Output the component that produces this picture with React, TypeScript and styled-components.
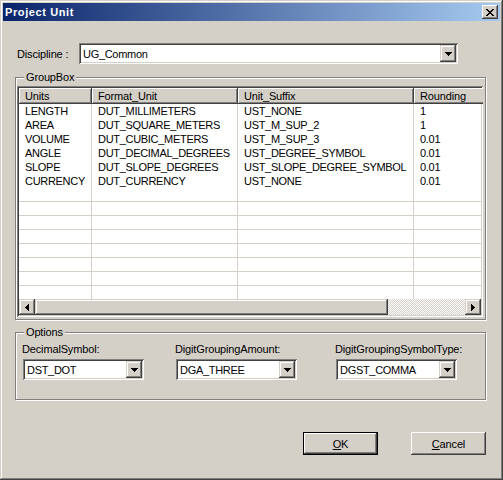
import React from "react";
import styled, { createGlobalStyle, css } from "styled-components";

const face = "#D4D0C8";
const shade = "#808080";
const dark = "#404040";

const GlobalStyle = createGlobalStyle`
  html, body {
    margin: 0;
    padding: 0;
    background: ${face};
  }
  * {
    box-sizing: border-box;
  }
`;

// raised bevel used on combo / scroll buttons and the grid header
const raised = css`
  background: ${face};
  box-shadow: inset -1px -1px ${dark}, inset 1px 1px ${face},
    inset -2px -2px ${shade}, inset 2px 2px #fff;
`;

const sunken = css`
  box-shadow: inset 1px 1px ${shade}, inset -1px -1px #fff,
    inset 2px 2px ${dark}, inset -2px -2px ${face};
`;

// upper case values are set tighter, like the old bitmap font
const caps = css`
  letter-spacing: -0.3px;
`;

const Window = styled.div`
  width: 503px;
  height: 480px;
  padding: 3px;
  display: flex;
  flex-direction: column;
  background: ${face};
  font-family: "Liberation Sans", Arial, sans-serif;
  font-size: 11px;
  letter-spacing: -0.15px;
  color: #000;
  box-shadow: inset -1px -1px ${dark}, inset 1px 1px ${face},
    inset -2px -2px ${shade}, inset 2px 2px #fff;
`;

const TitleBar = styled.div`
  height: 18px;
  flex: none;
  display: flex;
  align-items: center;
  justify-content: space-between;
  padding: 0 2px;
  background: linear-gradient(to right, #0a246a, #a6caf0);
`;

const Title = styled.span`
  color: #fff;
  font-weight: bold;
  font-size: 11px;
  letter-spacing: 0.6px;
`;

const CloseBox = styled.div`
  width: 16px;
  height: 14px;
  display: flex;
  align-items: center;
  justify-content: center;
  background: ${face};
  box-shadow: inset -1px -1px ${dark}, inset 1px 1px #fff,
    inset -2px -2px ${shade}, inset 2px 2px ${face};
`;

const Body = styled.div`
  display: flex;
  flex-direction: column;
  padding-left: 12px;
`;

const FieldRow = styled.div`
  display: flex;
  align-items: center;
  margin-top: 22px;
  padding-left: 2px;
`;

const FieldLabel = styled.span`
  width: 62px;
`;

const ComboBox = styled.div<{ $w: number }>`
  width: ${(p) => p.$w}px;
  height: 21px;
  padding: 2px;
  display: flex;
  align-items: center;
  background: #fff;
  ${sunken};
`;

const ComboText = styled.span`
  flex: 1;
  padding-left: 2px;
  white-space: nowrap;
  ${caps};
`;

const ComboButton = styled.div`
  width: 16px;
  height: 17px;
  display: flex;
  align-items: center;
  justify-content: center;
  ${raised};
`;

const Frame = styled.div<{ $gap: number }>`
  position: relative;
  width: 471px;
  margin-top: ${(p) => p.$gap}px;
  border: 1px solid ${shade};
  box-shadow: inset 1px 1px #fff, 1px 1px #fff;
`;

const Caption = styled.span`
  position: absolute;
  top: -7px;
  left: 8px;
  padding: 0 2px;
  line-height: 13px;
  background: ${face};
`;

const GridFrame = styled(Frame)`
  padding: 8px 0 2px 1px;
`;

const OptionsFrame = styled(Frame)`
  padding: 10px 0 19px 7px;
`;

const GridView = styled.div`
  width: 466px;
  height: 231px;
  padding: 2px;
  display: flex;
  flex-direction: column;
  overflow: hidden;
  background: #fff;
  ${sunken};
`;

const Row = styled.div`
  display: flex;
  flex: none;
`;

const HeadCell = styled.div<{ $w: number }>`
  flex: 0 0 ${(p) => p.$w}px;
  height: 16px;
  line-height: 16px;
  padding-left: 6px;
  white-space: nowrap;
  overflow: hidden;
  background: ${face};
  box-shadow: inset -1px -1px ${dark}, inset 1px 1px #fff,
    inset -2px -2px ${shade};
`;

const Rows = styled.div`
  height: 195px;
  overflow: hidden;
  background: #fff;
`;

const Cell = styled.div<{ $w: number; $blank?: boolean }>`
  flex: 0 0 ${(p) => p.$w}px;
  height: 14px;
  line-height: 14px;
  padding-left: 6px;
  white-space: nowrap;
  overflow: hidden;
  border-right: 1px solid ${face};
  border-bottom: ${(p) => (p.$blank ? `1px solid ${face}` : "none")};
  ${caps};
`;

const HScroll = styled.div`
  height: 16px;
  flex: none;
  display: flex;
`;

const ScrollButton = styled.div`
  width: 16px;
  height: 16px;
  flex: none;
  display: flex;
  align-items: center;
  justify-content: center;
  ${raised};
`;

const Thumb = styled.div<{ $w: number }>`
  width: ${(p) => p.$w}px;
  flex: none;
  ${raised};
`;

const Track = styled.div`
  flex: 1;
  background: repeating-conic-gradient(#fff 0 25%, ${face} 0 50%) 0 0 / 2px
    2px;
`;

const OptionsGrid = styled.div`
  display: grid;
  grid-template-columns: 153px 160px 121px;
`;

const OptionField = styled.div`
  display: flex;
  flex-direction: column;
  gap: 3px;
`;

const OptionLabel = styled.span`
  line-height: 13px;
  margin-left: -1px;
`;

const ButtonRow = styled.div`
  display: flex;
  justify-content: flex-end;
  gap: 33px;
  margin-top: 32px;
  padding-right: 14px;
`;

const PushButton = styled.button<{ $default?: boolean }>`
  width: 75px;
  height: 23px;
  padding: 0;
  font: inherit;
  letter-spacing: inherit;
  color: #000;
  background: ${face};
  ${(p) =>
    p.$default
      ? css`
          border: 1px solid #000;
          box-shadow: inset -1px -1px ${dark}, inset 1px 1px #fff,
            inset -2px -2px ${shade};
        `
      : css`
          border: none;
          box-shadow: inset -1px -1px ${dark}, inset 1px 1px #fff,
            inset -2px -2px ${shade}, inset 2px 2px ${face};
        `}
`;

const Key = styled.span`
  text-decoration: underline;
`;

// pixel glyphs
const Glyph = ({ w, h, px }: { w: number; h: number; px: number[][] }) => (
  <svg width={w} height={h} viewBox={`0 0 ${w} ${h}`} shapeRendering="crispEdges">
    {px.map(([x, y, len], i) => (
      <rect key={i} x={x} y={y} width={len} height={1} fill="#000" />
    ))}
  </svg>
);

const closePx = [
  [0, 0, 2], [6, 0, 2],
  [1, 1, 2], [5, 1, 2],
  [2, 2, 4],
  [3, 3, 2],
  [2, 4, 4],
  [1, 5, 2], [5, 5, 2],
  [0, 6, 2], [6, 6, 2],
];
const downPx = [[0, 0, 7], [1, 1, 5], [2, 2, 3], [3, 3, 1]];
const leftPx = [[3, 0, 1], [2, 1, 2], [1, 2, 3], [0, 3, 4], [1, 4, 3], [2, 5, 2], [3, 6, 1]];
const rightPx = [[0, 0, 1], [0, 1, 2], [0, 2, 3], [0, 3, 4], [0, 4, 3], [0, 5, 2], [0, 6, 1]];

const Combo = ({ width, value }: { width: number; value: string }) => (
  <ComboBox $w={width}>
    <ComboText>{value}</ComboText>
    <ComboButton>
      <Glyph w={7} h={4} px={downPx} />
    </ComboButton>
  </ComboBox>
);

const columns = [
  { title: "Units", width: 73 },
  { title: "Format_Unit", width: 146 },
  { title: "Unit_Suffix", width: 176 },
  { title: "Rounding", width: 120 },
];

const units = [
  ["LENGTH", "DUT_MILLIMETERS", "UST_NONE", "1"],
  ["AREA", "DUT_SQUARE_METERS", "UST_M_SUP_2", "1"],
  ["VOLUME", "DUT_CUBIC_METERS", "UST_M_SUP_3", "0.01"],
  ["ANGLE", "DUT_DECIMAL_DEGREES", "UST_DEGREE_SYMBOL", "0.01"],
  ["SLOPE", "DUT_SLOPE_DEGREES", "UST_SLOPE_DEGREE_SYMBOL", "0.01"],
  ["CURRENCY", "DUT_CURRENCY", "UST_NONE", "0.01"],
];

const options = [
  { label: "DecimalSymbol:", value: "DST_DOT" },
  { label: "DigitGroupingAmount:", value: "DGA_THREE" },
  { label: "DigitGroupingSymbolType:", value: "DGST_COMMA" },
];

export default function App() {
  const blanks = Array.from({ length: 9 });
  return (
    <>
      <GlobalStyle />
      <Window>
        <TitleBar>
          <Title>Project Unit</Title>
          <CloseBox>
            <Glyph w={8} h={7} px={closePx} />
          </CloseBox>
        </TitleBar>
        <Body>
          <FieldRow>
            <FieldLabel>Discipline :</FieldLabel>
            <Combo width={379} value="UG_Common" />
          </FieldRow>

          <GridFrame $gap={13}>
            <Caption>GroupBox</Caption>
            <GridView>
              <Row>
                {columns.map((c) => (
                  <HeadCell key={c.title} $w={c.width}>
                    {c.title}
                  </HeadCell>
                ))}
              </Row>
              <Rows>
                {units.map((r) => (
                  <Row key={r[0]}>
                    {r.map((v, i) => (
                      <Cell key={i} $w={columns[i].width}>
                        {v}
                      </Cell>
                    ))}
                  </Row>
                ))}
                {blanks.map((_, n) => (
                  <Row key={`b${n}`}>
                    {columns.map((c) => (
                      <Cell key={c.title} $w={c.width} $blank />
                    ))}
                  </Row>
                ))}
              </Rows>
              <HScroll>
                <ScrollButton>
                  <Glyph w={4} h={7} px={leftPx} />
                </ScrollButton>
                <Thumb $w={353} />
                <Track />
                <ScrollButton>
                  <Glyph w={4} h={7} px={rightPx} />
                </ScrollButton>
              </HScroll>
            </GridView>
          </GridFrame>

          <OptionsFrame $gap={12}>
            <Caption>Options</Caption>
            <OptionsGrid>
              {options.map((o) => (
                <OptionField key={o.label}>
                  <OptionLabel>{o.label}</OptionLabel>
                  <Combo width={121} value={o.value} />
                </OptionField>
              ))}
            </OptionsGrid>
          </OptionsFrame>

          <ButtonRow>
            <PushButton $default>
              <Key>O</Key>K
            </PushButton>
            <PushButton>
              <Key>C</Key>ancel
            </PushButton>
          </ButtonRow>
        </Body>
      </Window>
    </>
  );
}
